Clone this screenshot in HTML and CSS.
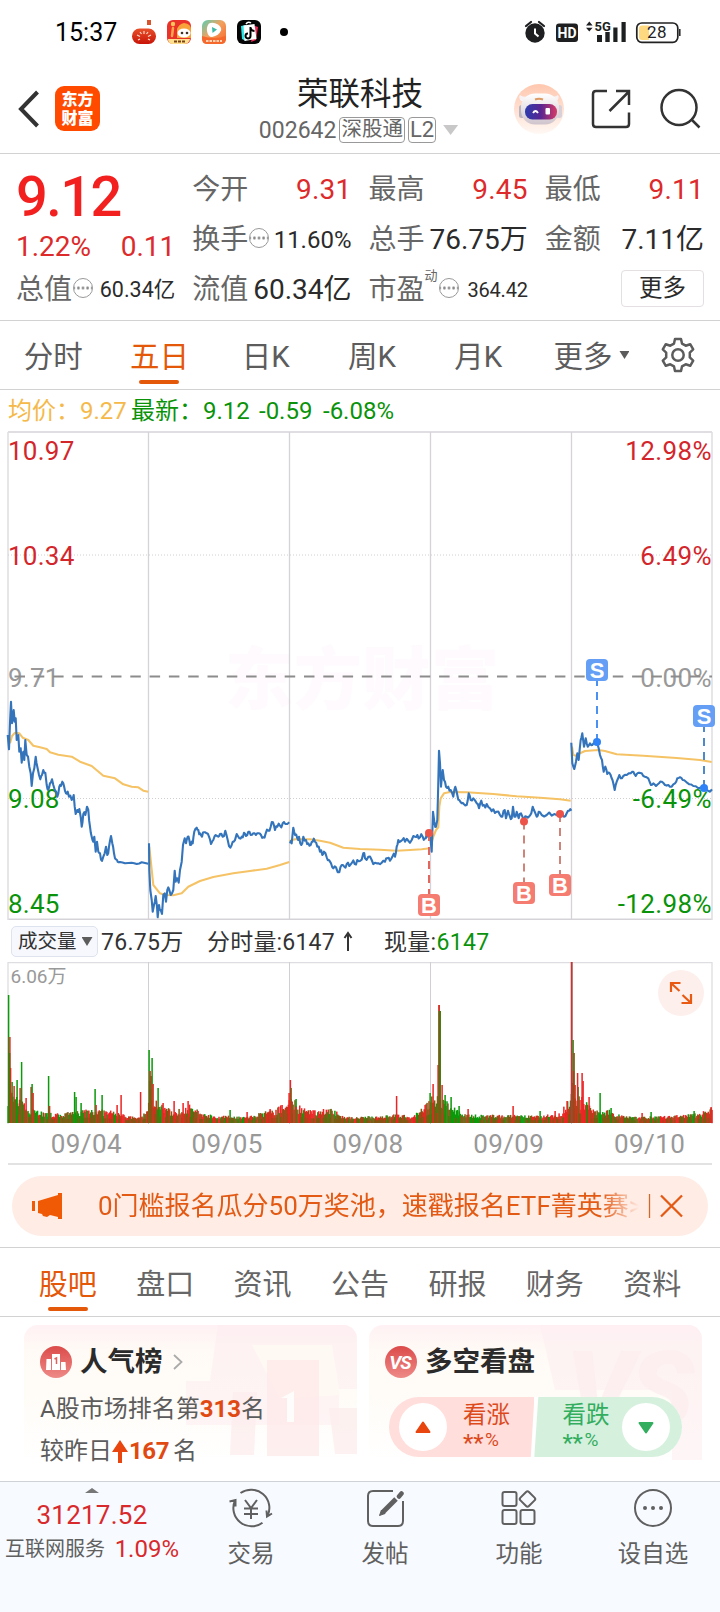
FILE: index.html
```html
<!DOCTYPE html>
<html lang="zh-CN">
<head>
<meta charset="utf-8">
<title>荣联科技 002642</title>
<link rel="stylesheet" href="styles.css">
</head>
<body>
<div class="status">
  <span class="clock">15:37</span>
  <svg class="apps" width="160" height="28" viewBox="130 18 160 28">
    <defs>
      <linearGradient id="pk" x1="0" y1="0" x2="0" y2="1"><stop offset="0" stop-color="#e8502a"/><stop offset="1" stop-color="#c81408"/></linearGradient>
      <linearGradient id="pl" x1="0" y1="0" x2="1" y2="1"><stop offset="0" stop-color="#53d0b5"/><stop offset=".45" stop-color="#f1a25f"/><stop offset="1" stop-color="#f9652a"/></linearGradient>
    </defs>
    <path d="M147 20h4v5h-4z" fill="#d9532c"/>
    <rect x="132" y="28.500" width="24" height="15.500" rx="7.500" fill="url(#pk)"/>
    <path d="M137 35l3 1.500M140 32l1.500 2M144 31v3M148 32l-1.500 2M151 35l-3 1.500M138 40l2-1M150 40l-2-1" stroke="#ffd9c8" stroke-width="1.200"/>
    <rect x="167" y="20" width="24" height="24" rx="6" fill="#e8322a"/>
    <path d="M177 29q2-5 7-6 7 1 7 6v9h-14z" fill="#f8a33a"/>
    <path d="M168 39h22q-1 5-6 5h-11q-5 0-5-5z" fill="#ffe08f"/>
    <ellipse cx="184" cy="33" rx="6.500" ry="4.500" fill="#fff"/>
    <circle cx="182" cy="33" r="1.300" fill="#432"/><circle cx="187" cy="33" r="1.300" fill="#432"/>
    <path d="M173 28l-1 8" stroke="#ffa64b" stroke-width="2.500" stroke-linecap="round"/><circle cx="173" cy="24" r="2.200" fill="#ffc45b"/>
    <path d="M174 41.500h11" stroke="#7a4216" stroke-width="2" stroke-dasharray="3 1"/>
    <rect x="202" y="20" width="24" height="24" rx="6" fill="url(#pl)"/>
    <path d="M202 36q12 4 24 0v3q0 5-5 5h-14q-5 0-5-5z" fill="#f5692d"/>
    <path d="M209 23.500q4-2 9 1 4 3 3 6-2 5-9 6.500-4 0-5-6-.500-5 2-7.500z" fill="#fff"/><path d="M212 27l5 2.500-4.500 3.500z" fill="#3fb9a5"/>
    <path d="M206 41h16" stroke="#ffd3b4" stroke-width="2" stroke-dasharray="2.500 1"/>
    <rect x="237" y="20" width="24" height="24" rx="6" fill="#050505"/>
    <path d="M241 26l5-1v16l-4-2z" fill="#29e6e6"/><path d="M255 26l3 1-2 13-5 2z" fill="#f22a58"/>
    <path d="M243.500 25.500l11-1.500 2 15-12 2z" fill="#fff"/><path d="M246 24q2-3 5-1" fill="none" stroke="#fff" stroke-width="1.500"/>
    <path d="M250.500 27v9a2.500 2.500 0 1 1-2.500-2.600M250.500 28q1 3 4 3" fill="none" stroke="#000" stroke-width="2"/>
    <circle cx="284" cy="32" r="4" fill="#000"/>
  </svg>
  <svg class="system" width="160" height="28" viewBox="522 18 160 28">
    <circle cx="535" cy="33" r="9.700" fill="#1d1f20"/>
    <path d="M526 26l5-4M544 26l-5-4" stroke="#1d1f20" stroke-width="2.200" stroke-linecap="round"/>
    <path d="M535 28.500v5l3.500 3" fill="none" stroke="#fff" stroke-width="2"/>
    <rect x="556" y="23.500" width="22" height="18.500" rx="3" fill="#1d1f20"/>
    <text x="567" y="37.700" text-anchor="middle" class="hd">HD</text>
    <path d="M586 25.500l3.300-4 3.300 4zM586 27.700l3.300 3.700 3.300-3.700z" fill="#1d1f20"/>
    <text x="594.500" y="30.500" class="five">5G</text>
    <path d="M597 35h5v7h-5zM605.300 32h4.400v10h-4.400zM613.300 27.500h4.200V42h-4.200zM621.500 22h4.200v20h-4.200z" fill="#1d1f20"/>
    <rect x="636.800" y="23" width="41" height="19.300" rx="5" fill="#fff" stroke="#222" stroke-width="1.700"/>
    <path d="M642 25.500h7v14.500h-7q-3 0-3-3v-8.500q0-3 3-3z" fill="#ffd980"/>
    <path d="M679.800 29v7" stroke="#222" stroke-width="1.500"/>
    <text x="657" y="38.300" text-anchor="middle" class="bat">28</text>
  </svg>
</div>

<header class="head">
  <div class="head-left">
    <svg width="22" height="38" viewBox="0 0 22 38"><path d="M19.500 2L3 19l16.500 17" fill="none" stroke="#333" stroke-width="4"/></svg>
    <div class="logo"><span>东方</span><span>财富</span></div>
  </div>
  <div class="title">
    <h1>荣联科技</h1>
    <div class="sub"><span>002642</span><i class="tag">深股通</i><i class="tag l2">L2</i><b class="tri"></b></div>
  </div>
  <svg class="actions" width="190" height="56" viewBox="512 81 190 56">
    <defs>
      <linearGradient id="rb" x1="0" y1="0" x2="0" y2="1"><stop offset="0" stop-color="#ffc7ae"/><stop offset="1" stop-color="#fff8f4"/></linearGradient>
      <linearGradient id="rv"><stop offset="0" stop-color="#2b3cae"/><stop offset=".5" stop-color="#5a2590"/><stop offset="1" stop-color="#d83b66"/></linearGradient>
      <linearGradient id="rh" x1="0" y1="0" x2="0" y2="1"><stop offset="0" stop-color="#fff"/><stop offset="1" stop-color="#cfc4cc"/></linearGradient>
    </defs>
    <circle cx="539" cy="109" r="25" fill="url(#rb)"/>
    <path d="M521 101q-3-4-1-6 3 3 9 1h20q6 2 9-1 2 3-2 7z" fill="#f7f3f4"/>
    <rect x="519" y="105" width="6" height="13" rx="2.500" fill="#b9b4bd"/><rect x="556" y="105" width="6" height="13" rx="2.500" fill="#d9d1d8"/>
    <rect x="521" y="93.500" width="38" height="31" rx="14" fill="url(#rh)"/>
    <rect x="525" y="104" width="32" height="15.500" rx="7.500" fill="url(#rv)"/>
    <path d="M533 113q2.500-4 5 0" stroke="#fff" stroke-width="1.800" fill="none"/><rect x="545.500" y="108" width="4.500" height="6.500" rx="1" fill="#fff"/>
    <path d="M535 99.500q4-1.500 8 0" stroke="#dd9a63" stroke-width="2" fill="none"/>
    <g fill="none" stroke="#333" stroke-width="2.500">
      <path d="M607 91h-11q-3 0-3 3v30q0 3 3 3h30q3 0 3-3v-11.500"/><path d="M609.500 111L629 91.500M616 91h13v14"/>
      <circle cx="679" cy="107.500" r="17.500"/><path d="M691 119l8.500 8.500"/>
    </g>
  </svg>
</header>

<section class="quote">
  <div class="qcol">
    <div class="last">9.12</div>
    <div class="change"><span>1.22%</span><span>0.11</span></div>
    <div class="cell"><label>总值</label><i class="info"></i><b class="s21">60.34亿</b></div>
  </div>
  <div class="qcol">
    <div class="cell"><label>今开</label><b class="up">9.31</b></div>
    <div class="cell"><label>换手</label><i class="info"></i><b class="s24">11.60%</b></div>
    <div class="cell"><label>流值</label><b>60.34亿</b></div>
  </div>
  <div class="qcol">
    <div class="cell"><label>最高</label><b class="up">9.45</b></div>
    <div class="cell"><label>总手</label><b>76.75万</b></div>
    <div class="cell"><label>市盈</label><sup>动</sup><i class="info"></i><b class="s20">364.42</b></div>
  </div>
  <div class="qcol">
    <div class="cell"><label>最低</label><b class="up">9.11</b></div>
    <div class="cell"><label>金额</label><b>7.11亿</b></div>
    <div class="cell"><button class="more">更多</button></div>
  </div>
</section>

<nav class="periods">
  <a>分时</a><a class="on">五日</a><a>日K</a><a>周K</a><a>月K</a><a class="other">更多<b class="tri dark"></b></a>
  <a class="gear"><svg width="36" height="36" viewBox="0 0 36 36" fill="none" stroke="#5c5c5c" stroke-width="2.500" stroke-linejoin="round"><path d="M15 2h6l1 4.600 3.700 2.100 4.500-1.500 3 5.200-3.400 3.200v4.800l3.400 3.200-3 5.200-4.500-1.500-3.700 2.100L21 34h-6l-1-4.600-3.700-2.100-4.500 1.500-3-5.200 3.400-3.200v-4.800L2.800 12.400l3-5.200 4.500 1.500L14 6.600z"/><circle cx="18" cy="18" r="5.700"/></svg></a>
</nav>

<div class="legend"><span class="avg">均价：</span><span class="avg n1">9.27</span><span class="n2">最新：</span><span class="n3">9.12</span><span class="n4">-0.59</span><span>-6.08%</span></div>

<svg class="price" width="720" height="489" viewBox="0 431 720 489">
  <text x="225" y="704" class="mark" textLength="274">东方财富</text>
  <g stroke="#d6d3d8" stroke-width="1.300" fill="none">
    <path d="M148.500 432v488M289.500 432v488M430.500 432v488M571.500 432v488"/>
    <path d="M8 432h704" stroke-width="1.500"/><path d="M8 919.500h704" stroke-width="2"/><path d="M8 432v488M712 432v488" stroke="#dedee2" stroke-width="1.500"/>
  </g>
  <path d="M8 555h704M8 798.500h704" stroke="#d0d0d0" stroke-dasharray="1 2"/>
  <g class="axis">
    <g fill="#d3262b"><text x="8" y="460">10.97</text><text x="8" y="565">10.34</text><text x="712" y="460" class="r">12.98%</text><text x="712" y="565" class="r">6.49%</text></g>
    <g fill="#999"><text x="8" y="687">9.71</text><text x="712" y="687" class="r">0.00%</text></g>
    <g fill="#0a930a"><text x="8" y="808">9.08</text><text x="8" y="913">8.45</text><text x="712" y="808" class="r">-6.49%</text><text x="712" y="913" class="r">-12.98%</text></g>
  </g>
  <path d="M14.500 676.500H712" stroke="#8c8c8c" stroke-width="1.800" stroke-dasharray="10.500 8.800"/>
  <g id="lines" fill="none" stroke-linejoin="round"></g>
  <g id="marks"></g>
</svg>

<div class="volinfo">
  <span class="pick">成交量<b class="tri dark"></b></span><span class="v1">76.75万</span><span class="v2">分时量:6147</span><svg class="arr" width="10" height="22" viewBox="0 0 10 22"><path d="M5 20V4M1.500 7L5 2l3.500 5" fill="none" stroke="#333" stroke-width="2"/></svg><span>现量:<em>6147</em></span>
</div>

<svg class="volume" width="720" height="162" viewBox="0 962 720 162">
  <path d="M8 962.700h704M8 962v162M712 962v162" stroke="#dedee2" stroke-width="1.300"/>
  <path d="M148.500 962v162M289.500 962v162M430.500 962v162M571.500 962v162" stroke="#d2cfd4"/>
  <text x="10.500" y="983" class="max">6.06万</text>
  <g id="bars"></g>
  <circle cx="681" cy="993" r="23" fill="#fdf0ec"/>
  <path d="M671 992v-9h9.500M671.500 983.500l8 7.500M691 994v9h-9.500M690.500 1002.500l-8-7.500" fill="none" stroke="#e85a12" stroke-width="2.200"/>
</svg>
<div class="dates"><span>09/04</span><span>09/05</span><span>09/08</span><span>09/09</span><span>09/10</span></div>

<div class="banner">
  <svg width="32" height="28" viewBox="0 0 32 28" fill="#f05a05"><path d="M0 9h3v10H0zM6 9l20-6V1h4v26h-4v-2l-8-2-3 2-4-1-1-2-4-1z"/></svg>
  <p>0门槛报名瓜分50万奖池，速戳报名ETF菁英赛&gt;</p>
  <svg width="36" height="24" viewBox="0 0 36 24" fill="none" stroke="#e25a14" stroke-width="2"><path d="M1.500 0v24" stroke="#cf6a2c" stroke-width="1.300"/><path d="M13 1.500l21 21M34 1.500l-21 21" stroke-width="2.300"/></svg>
</div>

<nav class="sections"><a class="on">股吧</a><a>盘口</a><a>资讯</a><a>公告</a><a>研报</a><a>财务</a><a>资料</a></nav>

<section class="cards">
  <article class="card">
    <svg class="art" width="333" height="135" viewBox="24 1325 333 135">
      <path d="M218 1325h139v64h-18v36H186v-44h24z" fill="#fdecef" opacity=".5"/><path d="M252 1345h80l8 50-60 4z" fill="#fff9f3"/>
      <path d="M267 1360h52v96h-52z" fill="#fde6e7" opacity=".65"/><path d="M233 1392h24l-3 63h-24zM329 1408h28v46h-22z" fill="#fdeeee" opacity=".8"/><path d="M281 1398l13-7v31h-7v-24z" fill="#fffdfb"/>
    </svg>
    <h2><svg width="32" height="32" viewBox="0 0 32 32"><circle cx="16" cy="16" r="16" fill="url(#badge)"/><path d="M6.500 13H11v11H6zM12 8h8v16h-8zM21 16h4.500l.500 8h-5z" fill="#fff"/><path d="M14.500 13l2-1v6" fill="none" stroke="#e25d5b" stroke-width="1.500"/><defs><linearGradient id="badge" x1="0" y1="0" x2="0" y2="1"><stop offset="0" stop-color="#db4b4a"/><stop offset="1" stop-color="#ee8a87"/></linearGradient></defs></svg>人气榜<svg class="go" width="10" height="16" viewBox="0 0 10 16"><path d="M1 1l7.500 7L1 15" fill="none" stroke="#aaa" stroke-width="1.800"/></svg></h2>
    <p>A股市场排名第<strong>313</strong>名</p>
    <p class="second">较昨日<svg width="16" height="23" viewBox="0 0 16 23"><path d="M8 0l8 12h-6v11H6V12H0z" fill="#e8450f"/></svg><strong>167</strong><span>名</span></p>
  </article>
  <article class="card">
    <svg class="art" width="333" height="135" viewBox="369 1325 333 135">
      <path d="M540 1325h162v135h-30V1390H555z" fill="#feeff1" opacity=".6"/>
      <text x="566" y="1426" class="vsart" textLength="128">VS</text>
    </svg>
    <h2><svg width="32" height="32" viewBox="0 0 32 32"><circle cx="16" cy="16" r="16" fill="url(#badge)"/><text x="15" y="22.700" text-anchor="middle" class="vs">VS</text></svg>多空看盘</h2>
    <div class="vote">
      <div class="bull"><i><svg width="16" height="13" viewBox="0 0 16 13"><path d="M8 1.500L14.500 11h-13z" fill="#e8450f" stroke="#e8450f" stroke-width="2" stroke-linejoin="round"/></svg></i><span>看涨<small><tt>**</tt>%</small></span></div>
      <div class="bear"><span>看跌<small><tt>**</tt>%</small></span><i><svg width="16" height="13" viewBox="0 0 16 13"><path d="M8 11.500L14.500 2h-13z" fill="#33ad5e" stroke="#33ad5e" stroke-width="2" stroke-linejoin="round"/></svg></i></div>
    </div>
  </article>
</section>

<footer class="dock">
  <div class="index"><svg width="14" height="5" viewBox="0 0 14 5"><path d="M0 5l7-5 7 5z" fill="#777"/></svg><b>31217.52</b><div><span>互联网服务</span><em>1.09%</em></div></div>
  <a><svg width="46" height="40" viewBox="0 0 46 40"><path d="M12.500 5A18.300 18.300 0 0 1 39.500 28M44 25.500l-5 3-.500-6M34.500 34.800A18.300 18.300 0 0 1 7 12.500M1.500 13.500l6-1.500v6.500M17 12l6 8 6-8M16 20.500h14M16 26h14M23 20v11"/></svg>交易</a>
  <a><svg width="38" height="40" viewBox="0 0 38 40"><path d="M27 3H7Q2 3 2 8v25q0 5 5 5h25q5 0 5-5V13"/><path d="M16.500 24.500L30 11" stroke-width="5"/><path d="M33 8.500L35.500 5.500" stroke-width="4.500" stroke-linecap="round"/><path d="M13.500 27.500l5.500-2-3.500-3.500z" fill="#606060" stroke-width="1"/></svg>发帖</a>
  <a><svg width="38" height="40" viewBox="0 0 38 40"><rect x="2.500" y="4" width="14" height="14" rx="2"/><rect x="2.500" y="22" width="14" height="14" rx="2"/><rect x="20.500" y="22" width="14" height="14" rx="2"/><rect x="21.500" y="5" width="12" height="12" rx="2" transform="rotate(45 27.500 11)"/></svg>功能</a>
  <a><svg width="40" height="40" viewBox="0 0 40 40"><circle cx="20" cy="20" r="18"/><path d="M12 20h.010M20 20h.010M28 20h.010" stroke-width="4" stroke-linecap="round"/></svg>设自选</a>
</footer>
<script src="chart.js"></script>
</body>
</html>
```

FILE: styles.css
```css
* { box-sizing: border-box; }
body { margin: 0; width: 720px; height: 1612px; overflow: hidden; background: #fff; color: #333; font-family: Roboto, "Noto Sans CJK SC", sans-serif; line-height: 1; display: flex; flex-direction: column; }
body > * { flex-shrink: 0; }
h1, h2, p { margin: 0; font-weight: 400; }
i, em { font-style: normal; }
svg { display: block; }

.status { height: 64px; display: flex; align-items: center; padding: 0 38px 0 55px; }
.clock { font-size: 25px; color: #000; width: 75px; padding-top: 1px; }
.system { margin-left: auto; }
.hd { font: 700 14px Roboto, sans-serif; fill: #fff; }
.five { font: 700 13px Roboto, sans-serif; fill: #1d1f20; }
.bat { font: 17px Roboto, sans-serif; fill: #222; letter-spacing: .4px; }

.head { height: 90px; border-bottom: 1px solid #d2d2d2; display: grid; grid-template-columns: 208px 304px 208px; align-items: center; }
.head-left { display: flex; align-items: center; gap: 15px; padding-left: 18px; }
.logo { width: 45px; height: 45px; border-radius: 9px; background: #ff4a00; color: #fff; font-size: 16px; font-weight: 900; display: flex; flex-direction: column; align-items: center; justify-content: center; gap: 2px; line-height: 17px; }
.title { display: flex; flex-direction: column; align-items: center; padding-top: 6px; }
.title h1 { font-size: 31.500px; line-height: 38px; color: #222; }
.sub { display: flex; align-items: center; font-size: 23px; color: #666; height: 34px; gap: 3px; margin: -1px 0 0 -3px; }
.tag { border: 1.500px solid #999; border-radius: 4px; font-size: 20.500px; height: 26px; line-height: 23px; padding: 0 1px; }
.tag.l2 { font-size: 22px; padding: 0 1px; }
.tri { display: inline-block; width: 15px; height: 10px; background: #c8c8c8; clip-path: polygon(0 0, 100% 0, 50% 100%); margin-left: 4px; }
.tri.dark { width: 10px; height: 8px; background: #5c5c5c; margin-left: 7px; }

.quote { height: 167px; border-bottom: 1px solid #d2d2d2; padding: 10px 16px 0; display: grid; grid-template-columns: repeat(4, minmax(0, 1fr)); column-gap: 17px; }
.last { font-size: 56px; font-weight: 500; color: #f32020; height: 62px; line-height: 66px; letter-spacing: -1.600px; }
.change { display: flex; justify-content: space-between; font-size: 28px; color: #dd2a2a; height: 38px; line-height: 42px; }
.cell { height: 50px; display: flex; align-items: center; }
.cell label { font-size: 28px; color: #666; white-space: nowrap; flex: none; padding-top: 1px; }
.cell b { font-weight: 400; font-size: 28px; margin-left: auto; color: #2b2b2b; white-space: nowrap; padding-top: 1px; }
.cell .up { color: #dd2a2a; padding-right: 0; letter-spacing: .200px; }
.cell .s21 { font-size: 21.500px; padding-top: 2px; } .cell .s24 { font-size: 24px; } .cell .s20 { font-size: 20px; padding-top: 2px; letter-spacing: -.200px; }
.cell sup { width: 13px; flex: none; font-size: 13px; color: #666; align-self: flex-start; line-height: 14px; margin-top: 5px; }
.info { width: 20px; height: 20px; flex: none; border: 1.500px solid #999; border-radius: 50%; margin-left: 1px; margin-top: -3px; background: radial-gradient(circle, #888 1.100px, transparent 1.600px) 50% 50% / 4.600px 17px; }
.more { font: 23.500px/32px Roboto, "Noto Sans CJK SC", sans-serif; color: #2b2b2b; background: #fff; border: 1px solid #e4dfe2; border-radius: 4px; width: 83px; height: 37px; margin: -2px 0 0 auto; padding: 0; }

.periods { height: 69px; border-bottom: 1px solid #d2d2d2; display: grid; grid-template-columns: repeat(5, 106.300px) 118px 70.500px; font-size: 29.500px; color: #5c5c5c; }
.periods a, .sections a { display: flex; align-items: center; justify-content: center; position: relative; padding-top: 6px; }
.periods .gear { padding: 0 0 0 11px; justify-content: flex-start; }
.periods .other { padding-left: 2px; }
.periods .other .tri { margin-top: -6px; }
.on { color: #e4580a; }
.on::after { content: ""; position: absolute; left: 50%; bottom: 5px; width: 40px; height: 4px; margin-left: -20px; border-radius: 2px; background: #e4580a; }

.legend { height: 41px; display: flex; align-items: center; padding-left: 8px; padding-top: 1px; font-size: 24px; color: #0a930a; }
.legend .avg { color: #f5b94a; }
.legend span { white-space: nowrap; }
.legend .n1 { width: 51px; } .legend .n2 { width: 72px; } .legend .n3 { width: 56px; } .legend .n4 { width: 64px; }
.price, .volume { flex: none; }
.mark { font: 900 68px "Noto Sans CJK SC", sans-serif; fill: #fefafd; }
.axis { font: 26px Roboto, sans-serif; letter-spacing: .250px; }
.r { text-anchor: end; letter-spacing: .400px; }
.badge { font: 700 22px "Liberation Sans", sans-serif; fill: #fff; text-anchor: middle; }

.volinfo { height: 42px; display: flex; align-items: center; padding-left: 11px; padding-top: 2px; font-size: 23px; color: #333; }
.pick { width: 87px; height: 31px; margin-top: -1px; border: 1px solid #dfe3ee; border-radius: 5px; background: #f6f8fe; font-size: 19.500px; display: flex; align-items: center; padding-left: 6px; }
.pick .tri.dark { margin-left: 5px; width: 11px; height: 9px; }
.v1 { margin-left: 3px; width: 106px; } .v2 { width: 136px; letter-spacing: .200px; }
.v1, .volinfo span:last-child { letter-spacing: .300px; }
.arr { margin-right: 31px; }
.volinfo em { color: #0a930a; }
.max { font: 19px Roboto, "Noto Sans CJK SC", sans-serif; fill: #999; }
.dates { height: 41px; margin: 0 8px; padding-left: 8px; border-bottom: 2px solid #e2e2e2; display: grid; grid-template-columns: repeat(5, 140.800px); align-items: center; font-size: 26px; letter-spacing: .4px; color: #999; }
.dates span { width: 140.800px; text-align: center; }

.banner { margin: 11px 12px 0; height: 60px; border-radius: 30px; background: #ffece5; display: flex; align-items: center; padding: 0 24px 0 20px; }
.banner p { margin-left: 34px; width: 541px; overflow: hidden; white-space: nowrap; font-size: 26px; line-height: 40px; color: #e25a14; -webkit-mask-image: linear-gradient(90deg, #000 93%, transparent 100%); mask-image: linear-gradient(90deg, #000 93%, transparent 100%); }
.banner p + svg { margin-left: 9px; }

.sections { margin-top: 11px; height: 70px; border-top: 1px solid #d2d2d2; border-bottom: 1px solid #d2d2d2; padding: 0 19px; display: grid; grid-template-columns: repeat(7, 1fr); font-size: 29px; color: #666; }

.cards { height: 164px; padding: 8px 18px 0 24px; display: grid; grid-template-columns: 333px 333px; gap: 12px; }
.card { position: relative; height: 136px; border-radius: 14px 14px 0 0; background: linear-gradient(#fff1f4, #fffaf5 18%, #fffcf7 50%, #fff); padding: 20px 16px 0; }
.art { position: absolute; left: 0; top: 0; border-radius: 14px 14px 0 0; }
.card > :not(.art) { position: relative; }
.card h2 { display: flex; align-items: center; height: 32px; font-size: 27.500px; line-height: 36px; padding-top: 1px; font-weight: 700; color: #2b2b2b; gap: 8px; }
.card h2 .go { margin-left: 2px; }
.card p { font-size: 24px; line-height: 30px; margin-top: 17px; color: #5c5c5c; display: flex; align-items: center; }
.card p.second { margin-top: 12px; }
.card strong { font-weight: 700; color: #e04a12; }
.second strong { margin: 0 4px 0 1px; letter-spacing: -.400px; }
.vs { font: italic 700 19px Roboto, sans-serif; fill: #fff; letter-spacing: -1px; }
.vsart { font: italic 900 106px Roboto, sans-serif; fill: #fdecee; opacity: .7; }
.vote { width: 293px; height: 60px; margin: 20px 0 0 4px; border-radius: 30px; overflow: hidden; display: flex; background: #fff; }
.vote > div { display: flex; align-items: center; height: 60px; }
.bull { width: 147px; background: #ffdedc; color: #dc4a1c; clip-path: polygon(0 0, 100% 0, 97.500% 100%, 0 100%); padding-left: 10px; gap: 16px; }
.bear { width: 150px; margin-left: -1px; background: #d6f0de; color: #33ad5e; clip-path: polygon(3.300% 0, 100% 0, 100% 100%, .600% 100%); padding-left: 29px; gap: 13px; }
.vote i { width: 48px; height: 48px; border-radius: 50%; background: #fff; display: flex; align-items: center; justify-content: center; flex: none; }
.vote span { font-size: 23.500px; line-height: 27px; white-space: nowrap; }
.vote small { display: flex; font-size: 19px; line-height: 22px; height: 24px; }
.vote tt { font: 24px/29px Roboto, sans-serif; width: 22px; letter-spacing: -.200px; }

.dock { height: 131px; border-top: 1px solid #cfd2d6; background: #f7faff; display: grid; grid-template-columns: 184px repeat(4, 134px); color: #606060; }
.index { display: flex; flex-direction: column; align-items: center; padding-top: 6px; }
.index b { font-weight: 400; font-size: 26px; letter-spacing: .250px; color: #d8292c; line-height: 30px; margin-top: 7px; }
.index div { display: flex; align-items: center; justify-content: space-between; width: 174px; font-size: 20px; height: 40px; margin-top: -1px; }
.index em { font-size: 24px; color: #d8292c; }
.dock a { display: flex; flex-direction: column; align-items: center; font-size: 23.500px; padding-top: 6px; gap: 15px; }
.dock a svg { fill: none; stroke: #606060; stroke-width: 2; }
```

FILE: chart.js
```js
const NS = "http://www.w3.org/2000/svg";
function add(parent, tag, attrs, text) {
  const el = document.createElementNS(NS, tag);
  for (const k in attrs) el.setAttribute(k, attrs[k]);
  if (text) el.textContent = text;
  parent.appendChild(el);
}
let seed = 7;
const rnd = () => (seed = (seed * 16807) % 2147483647) / 2147483647;
const pairs = s => s.trim().split(/\s+/).map(p => p.split(",").map(Number));

// Each series: [x offset, y offset, points in thirds of a pixel]
const A = [0, 660], B = [360, 640];
const avg = [
  [A, "30,250 36,228 45,218 58,220 68,233 85,240 100,257 120,262 140,267 150,277 175,284 215,290 240,305 275,318 310,347 345,355 370,373 395,380 415,382 430,392 445,395"],
  [A, "448,560 452,600 460,675 480,700 495,705 520,706 545,700 565,680 600,663 640,651 700,640 750,633 800,626 840,615 868,606"],
  [A, "868,543 885,538 930,538 960,542 990,548 1010,556 1030,563 1080,567 1140,569 1190,572 1230,570 1265,568 1290,565"],
  [B, "213,615 220,590 228,570 235,562 238,500 242,475 252,460 270,456 320,457 400,462 470,469 540,473 600,478 632,482"],
  [B, "636,320 640,345 648,347 660,340 675,333 715,330 735,333 770,343 850,347 950,354 1020,360 1055,366"]
];
const price = [
  [A, "23,225 27,268 33,125 36,190 41,150 44,185 47,175 50,240 55,225 58,275 62,265 65,308 70,275 73,300 76,240 80,285 84,290 88,320 92,340 95,378 99,340 103,325 107,290 112,320 117,345 121,358 126,345 130,330 136,338 140,375 145,390 150,370 156,358 160,375 163,385 168,395 172,410 178,380 183,378 187,365 192,378 198,400 203,395 207,410 215,420 221,405 224,440 227,462 232,450 238,447 242,470 245,500 250,462 256,465 261,440 265,450 270,500 275,530 280,545 283,530 287,575 291,545 295,575 300,580 306,603 310,590 314,580 318,560 322,585 327,560 333,528 337,550 342,580 348,598 354,608"],
  [A, "354,608 360,606 375,610 395,608 410,612 425,607 445,611", 1],
  [A, "447,550 448,630 451,690 455,720 458,755 462,735 467,708 471,740 473,772 477,735 482,750 486,762 490,705 494,700 498,725 502,690 508,690 512,705 516,700 520,690 524,632 527,665 532,655 536,668 540,630 545,605 549,555 554,535 558,550 563,530 568,540 573,555 578,550 583,515 590,503 595,510 600,520 606,530 612,517 620,520 627,530 633,552 640,540 647,525 655,530 660,522 668,530 676,512 683,540 691,563 698,545 705,540 710,522 718,535 725,530 732,518 738,528 745,515 752,525 760,520 768,525 776,520 783,525 790,532 797,520 805,512 812,500 819,487 825,510 832,500 840,497 848,490 856,492 868,487"],
  [A, "870,550 875,550 880,503 885,525 892,535 897,530 904,555 910,530 918,540 925,550 932,555 938,545 945,545 952,560 960,575 967,585 972,575 980,592 987,600 993,610 1000,625 1008,622 1018,637 1025,615 1033,620 1040,612 1048,618 1056,608 1064,612 1072,600 1080,603 1090,580 1095,595 1105,590 1115,600 1125,608 1135,610 1145,608 1155,605 1162,595 1170,602 1178,588 1185,590 1190,560 1195,540 1200,545 1207,540 1215,545 1225,542 1235,540 1245,530 1252,525 1260,532 1268,530 1275,535 1280,522 1287,520"],
  [B, "211,590 215,635 219,515 223,545 228,560 232,540 237,332 240,370 243,440 248,390 252,420 258,440 265,440 272,450 280,470 286,440 292,465 298,480 305,490 312,493 320,495 326,460 332,480 340,475 350,490 357,505 364,482 372,495 380,492 390,505 400,508 410,515 420,525 427,530 434,510 438,535 444,512 450,530 455,535 459,500 463,530 470,515 476,535 483,520 491,540 500,530 507,530 514,520 518,500 524,515 530,530 536,515 545,525 560,525 575,527 590,525 600,522 612,530 620,520 628,512 634,512"],
  [B, "634,308 637,370 643,387 648,365 652,340 656,360 662,300 667,280 672,320 677,295 683,320 690,310 697,315 705,310 711,305 716,325 720,345 726,360 731,395 736,380 742,402 748,398 755,415 760,430 764,450 770,425 778,405 782,415 790,408 800,405 812,400 820,395 827,408 835,398 845,400 855,410 865,415 873,435 880,430 888,438 897,430 905,425 915,435 925,435 935,440 945,430 952,415 960,412 968,420 978,425 988,433 1000,438 1015,445 1032,443 1040,450 1050,455 1056,448", 3]
];
const lines = document.getElementById("lines");
function draw(series, color, width, jitter) {
  for (const [[ox, oy], pts, own] of series) {
    const p = pairs(pts), out = [];
    p.forEach(([x, y], i) => {
      out.push([x, y]);
      const n = p[i + 1];
      if (jitter && n && n[0] - x > 4) out.push([(x + n[0]) / 2, (y + n[1]) / 2 + (rnd() - .5) * 2 * (own || jitter)]);
    });
    add(lines, "polyline", { points: out.map(([x, y]) => (ox + x / 3).toFixed(1) + "," + (oy + y / 3).toFixed(1)).join(" "), stroke: color, "stroke-width": width });
  }
}
draw(avg, "#f5c365", 2.1, 0);
draw(price, "#3474bb", 2.1, 9);

// Trade markers: letter, x, point y, badge centre y
const marks = document.getElementById("marks");
for (const [t, x, y, by] of [["B", 429, 833, 905], ["B", 524, 821.5, 893], ["B", 560, 814, 885], ["S", 597, 742, 670], ["S", 704, 788, 716]]) {
  const buy = t === "B";
  add(marks, "path", { d: `M${x} ${y}V${by}`, stroke: buy ? (x > 500 ? "#cf8379" : "#e2665c") : (x > 700 ? "#5089c9" : "#4b91f1"), "stroke-width": 2, "stroke-dasharray": "8 6" });
  add(marks, "circle", { cx: x, cy: y, r: 4, fill: buy ? "#ed5449" : "#2e82f5" });
  add(marks, "rect", { x: x - 11, y: by - 11, width: 22, height: 22, rx: 4, fill: buy ? "#f57c70" : "#649ff5" });
  add(marks, "text", { x, y: by + 7.7, class: "badge" }, t);
}

// Volume: ambient level by position, then individual peaks (x, height, colour)
const bars = document.getElementById("bars");
const R = "#ed2424", G = "#0a9a0a", O = "#7c5a12";
const level = pairs("8,30 14,27 20,20 28,15 36,12 45,8 60,7 74,9 90,13 100,11 115,9 128,5 138,3 147,10 149,40 154,25 160,16 175,9 188,16 200,9 215,5 230,5 245,4 262,8 275,12 285,16 290,28 298,15 310,10 330,13 345,4 360,4 380,5 394,7 410,5 420,10 430,22 438,26 443,22 450,16 460,9 475,6 500,6 540,5 560,8 572,26 582,24 592,11 605,12 618,7 640,4 670,5 695,7 712,13");
const at = x => { let i = 0; while (i < level.length - 2 && level[i + 1][0] < x) i++; const [a, b] = [level[i], level[i + 1]]; return a[1] + (b[1] - a[1]) * (x - a[0]) / (b[0] - a[0]); };
const bar = (x, h, fill) => add(bars, "rect", { x: x - .65, y: 1123 - h, width: 1.5, height: h, fill });
for (let x = 8; x <= 712; x += .95) {
  const l = at(x), q = rnd();
  const greenish = x < 80 || (x > 440 && x < 530) || (x > 595 && x < 660);
  bar(x, 2 + l * (.45 + rnd() * .65), q < .42 ? O : q < (greenish ? .62 : .85) ? R : G);
  if (rnd() < .4) bar(x, 1 + l * .35, O);
}
const peaks = { g: "8.5,128 12,41 17,43 21.5,61 32,39 48.5,47 74.5,31 76,26 95,34 102,28 149,73 152,65 158,35 230,13 291,35 296,24 430,30 445,28 451,26 459,17 540,12 573,83 578,36 600,30 611,15 651,11 694,12 83,10 81,20",
  r: "9.8,86 10.5,55 14,37 20,35 49.5,17 33,30 26,25 96,18 117,18 121,28 140.5,31 150,52 153,39 163,20 174,22 183,20 188,22 247,11 270,14 282,18 289,30 290.3,43 296,16 396.5,27 425,18 433,39 438,58 442,38 468,14 513,17 555,12 567,22 573.5,52 577.5,50 582,50 589,26 583,42 575,38 642,10 711,16",
  o: "9.5,70 31,36 151,47 291.5,22 439,118 440,112 574,70 572.5,40" };
for (const [k, c] of [["g", G], ["r", R], ["o", O]]) for (const [x, h] of pairs(peaks[k])) bar(x, h, c);
bar(439, 118, R);
add(bars, "rect", { x: 438.8, y: 1011, width: 2, height: 112, fill: "#367f0d" });
add(bars, "rect", { x: 570.7, y: 962, width: 2, height: 161, fill: "#b93a3a" });
```
